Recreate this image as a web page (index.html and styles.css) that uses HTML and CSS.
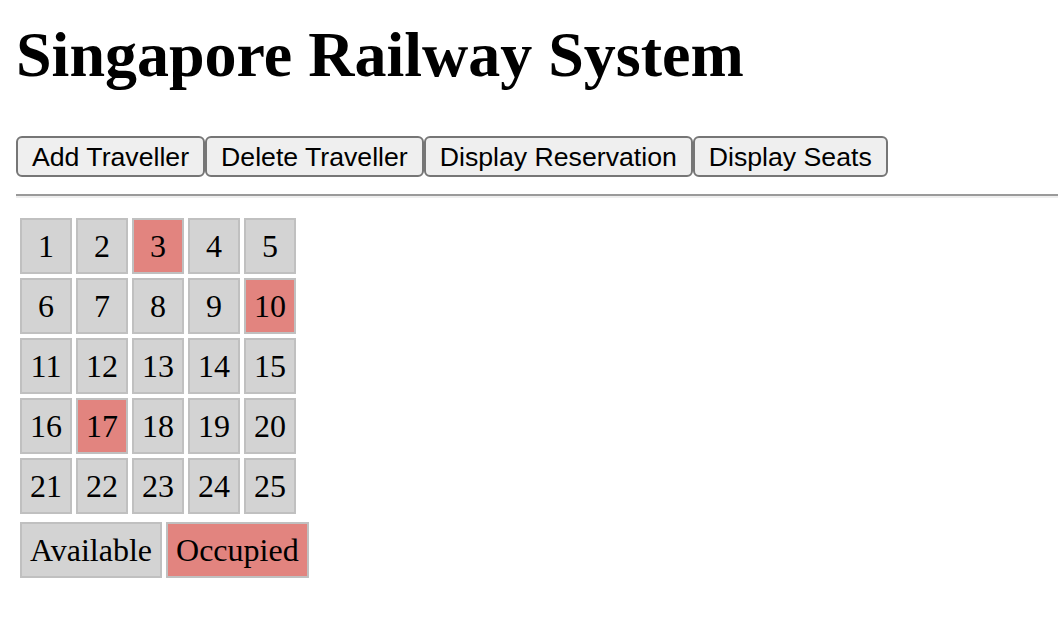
FILE: index.html
```html
<!DOCTYPE html>
<html>
<head>
<meta charset="utf-8">
<title>Singapore Railway System</title>
<link rel="stylesheet" href="styles.css">
</head>
<body>
<div class="page">
  <h1 class="title">Singapore Railway System</h1>
  <div class="toolbar"><button class="btn">Add Traveller</button><button class="btn">Delete Traveller</button><button class="btn">Display Reservation</button><button class="btn">Display Seats</button></div>
  <hr class="rule">
  <table class="seats">
    <tr><td class="seat">1</td><td class="seat">2</td><td class="seat occupied">3</td><td class="seat">4</td><td class="seat">5</td></tr>
    <tr><td class="seat">6</td><td class="seat">7</td><td class="seat">8</td><td class="seat">9</td><td class="seat occupied">10</td></tr>
    <tr><td class="seat">11</td><td class="seat">12</td><td class="seat">13</td><td class="seat">14</td><td class="seat">15</td></tr>
    <tr><td class="seat">16</td><td class="seat occupied">17</td><td class="seat">18</td><td class="seat">19</td><td class="seat">20</td></tr>
    <tr><td class="seat">21</td><td class="seat">22</td><td class="seat">23</td><td class="seat">24</td><td class="seat">25</td></tr>
  </table>
  <table class="legend">
    <tr><td class="key">Available</td><td class="key occupied">Occupied</td></tr>
  </table>
</div>
</body>
</html>
```
FILE: styles.css
```css
html, body {
  margin: 0;
  padding: 0;
  background: #ffffff;
}

.page {
  padding: 0 0 0 16px;
  font-family: "Liberation Serif", "Times New Roman", serif;
  color: #000;
}

.title {
  margin: 19px 0 46px;
  font-size: 64px;
  line-height: 71px;
  font-weight: bold;
}

.toolbar {
  display: flex;
  gap: 0;
}

.btn {
  height: 41px;
  margin: 0;
  padding: 0 14px;
  font-family: "Liberation Sans", Arial, sans-serif;
  font-size: 26.67px;
  line-height: 30px;
  color: #000;
  background: #efefef;
  border: 2px solid #767676;
  border-radius: 6px;
}

.rule {
  margin: 17px 0 16px;
  height: 0;
  border: 0;
  border-top: 2px solid #9a9a9a;
  border-bottom: 2px solid #eeeeee;
}

.seats, .legend {
  border-collapse: separate;
  border-spacing: 4px;
  font-size: 32px;
  line-height: 36px;
}

.seat {
  width: 32px;
  height: 36px;
  padding: 8px;
  text-align: center;
  vertical-align: middle;
  background: #d3d3d3;
  border: 2px solid #c0c0c0;
}

.key {
  height: 36px;
  padding: 8px;
  vertical-align: middle;
  background: #d3d3d3;
  border: 2px solid #c0c0c0;
}

.occupied {
  background: #e2847f;
}
```
